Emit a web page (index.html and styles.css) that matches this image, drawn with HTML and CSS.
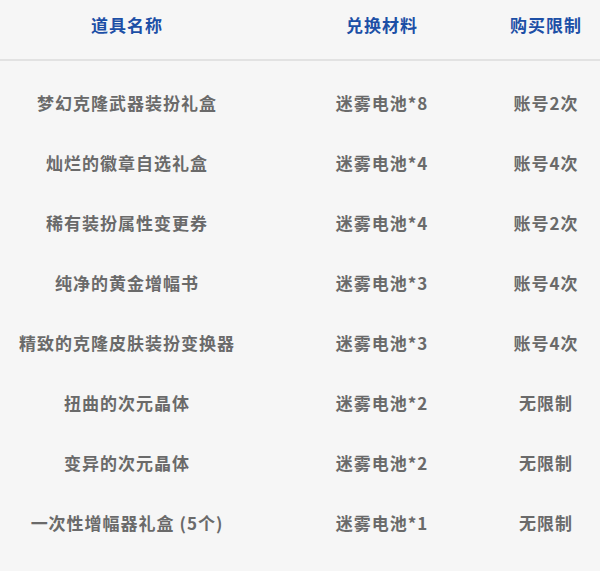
FILE: index.html
```html
<!DOCTYPE html>
<html lang="zh">
<head>
<meta charset="utf-8">
<link rel="stylesheet" href="styles.css">
</head>
<body>
<div class="table">
  <div class="row head">
    <div class="c1">道具名称</div>
    <div class="c2">兑换材料</div>
    <div class="c3">购买限制</div>
  </div>
  <div class="body">
    <div class="row"><div class="c1">梦幻克隆武器装扮礼盒</div><div class="c2">迷雾电池*8</div><div class="c3">账号2次</div></div>
    <div class="row"><div class="c1">灿烂的徽章自选礼盒</div><div class="c2">迷雾电池*4</div><div class="c3">账号4次</div></div>
    <div class="row"><div class="c1">稀有装扮属性变更券</div><div class="c2">迷雾电池*4</div><div class="c3">账号2次</div></div>
    <div class="row"><div class="c1">纯净的黄金增幅书</div><div class="c2">迷雾电池*3</div><div class="c3">账号4次</div></div>
    <div class="row"><div class="c1">精致的克隆皮肤装扮变换器</div><div class="c2">迷雾电池*3</div><div class="c3">账号4次</div></div>
    <div class="row"><div class="c1">扭曲的次元晶体</div><div class="c2">迷雾电池*2</div><div class="c3">无限制</div></div>
    <div class="row"><div class="c1">变异的次元晶体</div><div class="c2">迷雾电池*2</div><div class="c3">无限制</div></div>
    <div class="row"><div class="c1">一次性增幅器礼盒 (5个)</div><div class="c2">迷雾电池*1</div><div class="c3">无限制</div></div>
  </div>
</div>
</body>
</html>
```
FILE: styles.css
```css
html, body {
  margin: 0;
  padding: 0;
  background: #f6f6f6;
}
body {
  width: 600px;
  height: 571px;
  overflow: hidden;
  font-family: "Noto Sans CJK SC", "Noto Sans", sans-serif;
  font-weight: 700;
}
.table {
  display: flex;
  flex-direction: column;
}
.row {
  display: grid;
  grid-template-columns: 254px 256px 72px;
  height: 60px;
  align-items: center;
  font-size: 17px;
  line-height: 24px;
  color: #6a6a6a;
  letter-spacing: 1px;
}
.row > div {
  text-align: center;
  white-space: nowrap;
  display: flex;
  justify-content: center;
}
.head {
  height: 61px;
  align-items: start;
  padding-top: 13px;
  box-sizing: border-box;
  color: #1c4fa6;
  border-bottom: 2px solid #e2e2e2;
}
.body {
  padding-top: 12px;
}
```
